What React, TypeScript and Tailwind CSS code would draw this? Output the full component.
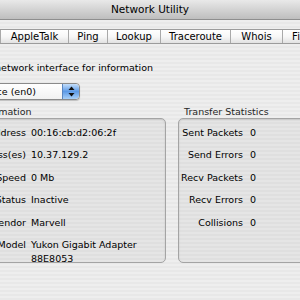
import React from 'react';

const tabs = [
  { name: 'Info', w: 'w-[36px]' },
  { name: 'Netstat', w: 'w-[50px]' },
  { name: 'AppleTalk', w: 'w-[68px]' },
  { name: 'Ping', w: 'w-[39px]' },
  { name: 'Lookup', w: 'w-[53px]' },
  { name: 'Traceroute', w: 'w-[70px]' },
  { name: 'Whois', w: 'w-[52px]' },
  { name: 'Finger', w: 'w-[50px]' },
  { name: 'Port Scan', w: 'w-[64px]' },
];

const info = [
  ['Hardware Address', '00:16:cb:d2:06:2f'],
  ['IP Address(es)', '10.37.129.2'],
  ['Link Speed', '0 Mb'],
  ['Link Status', 'Inactive'],
  ['Vendor', 'Marvell'],
  ['Model', 'Yukon Gigabit Adapter 88E8053'],
];

const stats = [
  ['Sent Packets', '0'],
  ['Send Errors', '0'],
  ['Recv Packets', '0'],
  ['Recv Errors', '0'],
  ['Collisions', '0'],
];

function Stepper() {
  return (
    <div className="w-[17px] h-full rounded-r-[4px] border-l border-[#5a86c0] bg-gradient-to-b from-[#c4defa] via-[#5d9ae6] to-[#a8d0f8] flex items-center justify-center">
      <svg width="7" height="11" viewBox="0 0 7 11">
        <path d="M3.5 0.5 L6.5 4 L0.5 4 Z" fill="#111" />
        <path d="M3.5 10.5 L6.5 7 L0.5 7 Z" fill="#111" />
      </svg>
    </div>
  );
}

export default function App() {
  return (
    <div className="w-[300px] h-[300px] overflow-hidden bg-[repeating-linear-gradient(180deg,#eeeeee_0px,#eeeeee_2px,#e8e8e8_2px,#e8e8e8_4px)] font-['DejaVu_Sans',sans-serif] text-black">
      <div className="w-[500px] ml-[-100px]">
        <div className="h-[20px] border-b border-[#8e8e8e] bg-gradient-to-b from-[#e9e9e9] to-[#bebebe] flex items-center justify-center text-[10.5px] leading-[13px]">
          Network Utility
        </div>

        <div className="mt-[9px] ml-[14px] flex h-[15px] border-y border-[#9c9c9c] bg-gradient-to-b from-white via-[#f7f7f7] to-[#e2e2e2]">
          {tabs.map(tab => (
            <div key={tab.name} className={`${tab.w} shrink-0 border-l border-[#a9a9a9] flex items-center justify-center text-[10px] leading-[13px] whitespace-nowrap`}>
              {tab.name}
            </div>
          ))}
        </div>

        <div className="mt-[18px] w-[253px] flex justify-end">
          <p className="shrink-0 whitespace-nowrap text-[9.5px] leading-[12px]">Please select a network interface for information</p>
        </div>

        <div className="mt-[9px] w-[180px] flex justify-end">
          <div className="shrink-0 h-[17px] flex items-center rounded-[4px] border border-[#8a8a8a] bg-gradient-to-b from-white to-[#f1f1f1] shadow-[0_1px_1px_rgba(0,0,0,0.2)]">
            <span className="pl-2 pr-[26px] text-[9.5px] leading-[12px] whitespace-nowrap">Ethernet Interface (en0)</span>
            <Stepper />
          </div>
        </div>

        <div className="mt-[6px] ml-[25px] grid grid-cols-[241px_222px] gap-x-[12px]">
          <div>
            <div className="pl-[6px] text-[9.5px] leading-[12px] text-[#262626]">Interface Information</div>
            <div className="h-[145px] rounded-[5px] border border-[#a4a4a4] bg-black/[0.035] shadow-[inset_0_1px_2px_rgba(0,0,0,0.12)] pt-[7px] grid grid-cols-[100px_1fr] gap-x-[5px] gap-y-[8.4px] content-start text-[9.5px] leading-[14px]">
              {info.map(([label, value]) => (
                <React.Fragment key={label}>
                  <div className="text-right whitespace-nowrap">{label}</div>
                  <div className="pr-[8px]">{value}</div>
                </React.Fragment>
              ))}
            </div>
          </div>
          <div>
            <div className="pl-[6px] text-[9.5px] leading-[12px] text-[#262626]">Transfer Statistics</div>
            <div className="h-[145px] rounded-[5px] border border-[#a4a4a4] bg-black/[0.035] shadow-[inset_0_1px_2px_rgba(0,0,0,0.12)] pt-[7px] grid grid-cols-[64px_1fr] gap-x-[7px] gap-y-[8.4px] content-start text-[9.5px] leading-[14px]">
              {stats.map(([label, value]) => (
                <React.Fragment key={label}>
                  <div className="text-right whitespace-nowrap">{label}</div>
                  <div>{value}</div>
                </React.Fragment>
              ))}
            </div>
          </div>
        </div>
      </div>
    </div>
  );
}
